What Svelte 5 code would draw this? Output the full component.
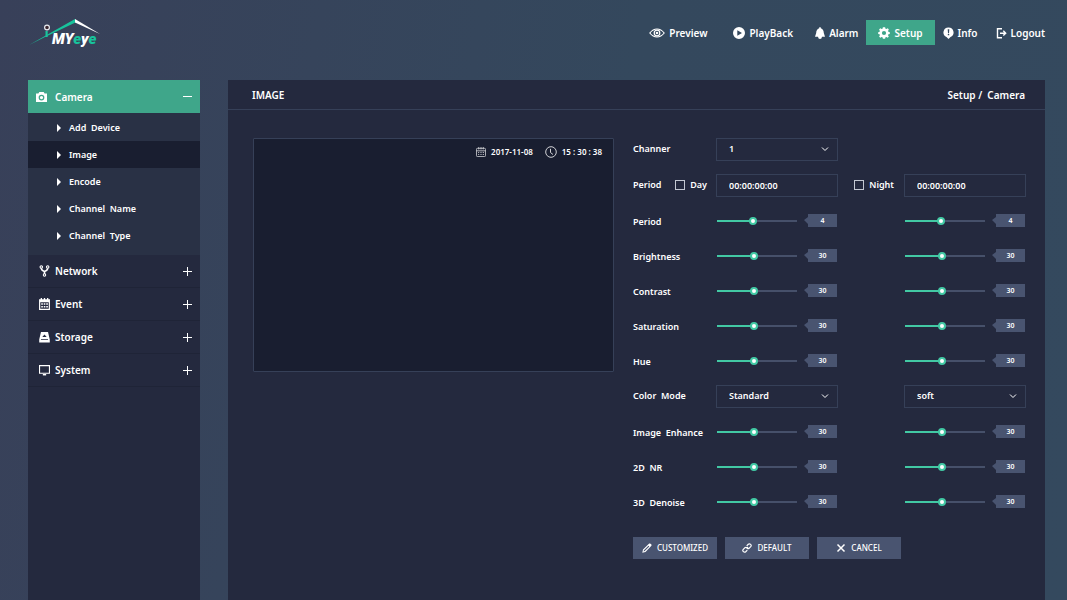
<script>
  const nav = [
    { id: 'preview', label: 'Preview' },
    { id: 'playback', label: 'PlayBack' },
    { id: 'alarm', label: 'Alarm' },
    { id: 'setup', label: 'Setup' },
    { id: 'info', label: 'Info' },
    { id: 'logout', label: 'Logout' },
  ];
  const cameraItems = ['Add  Device', 'Image', 'Encode', 'Channel  Name', 'Channel  Type'];
  const groups = ['Network', 'Event', 'Storage', 'System'];

  let page = $state('setup');
  let current = $state('Image');
  let cameraOpen = $state(true);

  let rows = $state([
    { type: 'channel', label: 'Channer' },
    { type: 'time', label: 'Period', day: '00:00:00:00', night: '00:00:00:00', dayOn: false, nightOn: false },
    { type: 'level', label: 'Period', day: 4, night: 4, max: 9 },
    { type: 'level', label: 'Brightness', day: 30, night: 30, max: 65 },
    { type: 'level', label: 'Contrast', day: 30, night: 30, max: 65 },
    { type: 'level', label: 'Saturation', day: 30, night: 30, max: 65 },
    { type: 'level', label: 'Hue', day: 30, night: 30, max: 65 },
    { type: 'mode', label: 'Color  Mode', day: 'Standard', night: 'soft' },
    { type: 'level', label: 'Image  Enhance', day: 30, night: 30, max: 65 },
    { type: 'level', label: '2D  NR', day: 30, night: 30, max: 65 },
    { type: 'level', label: '3D  Denoise', day: 30, night: 30, max: 65 },
  ]);
</script>

{#snippet icon(name)}
  {#if name === 'preview'}
    <svg class="wide" viewBox="0 0 16 12" fill="none" stroke="currentColor" stroke-width="1.2">
      <path d="M.8 6Q4 2 8 2T15.2 6Q12 10 8 10T.8 6Z" />
      <circle cx="8" cy="6" r="2.800" /><circle cx="8" cy="6" r="1.300" fill="currentColor" stroke="none" />
    </svg>
  {:else if name === 'playback'}
    <svg viewBox="0 0 12 12" fill="currentColor">
      <path fill-rule="evenodd" d="M6 0a6 6 0 1 1 0 12A6 6 0 0 1 6 0ZM4.300 3.200v5.600L9 6Z" />
    </svg>
  {:else if name === 'alarm'}
    <svg class="bell" viewBox="0 0 10 12" fill="currentColor">
      <path d="M5 0q.8 0 .8 1.200C8 2 8.800 4 8.800 6L10 9.800H0L1.200 6C1.200 4 2 2 4.200 1.200Q4.200 0 5 0ZM3 9.800h4Q6.800 12 5 12T3 9.800Z" />
    </svg>
  {:else if name === 'setup'}
    <svg viewBox="0 0 12 12" fill="currentColor">
      <path fill-rule="evenodd" d="M4.900.2h2.200l.4 1.500.9.4L9.800 1.300l1 1.300L10 3.900l.4.9 1.400.4v1.700l-1.400.4-.4.9.8 1.300-1.100 1.200-1.300-.8-.9.4-.4 1.500H4.900l-.4-1.500-.9-.4-1.300.8-1.200-1.200.8-1.300-.3-.9L.2 6.900V5.200l1.400-.4.3-.9-.8-1.300 1.200-1.300 1.300.8.9-.4ZM6 3.900a2.100 2.100 0 1 0 0 4.200 2.100 2.100 0 0 0 0-4.200Z" />
    </svg>
  {:else if name === 'info'}
    <svg class="slim" viewBox="0 0 10 12" fill="currentColor">
      <path fill-rule="evenodd" d="M5 .5a5 5 0 0 1 2 9.600L5 12 3 10.100A5 5 0 0 1 5 .5ZM4.200 2.200l.3 4h1l.3-4ZM4.300 7v1.300h1.400V7Z" />
    </svg>
  {:else if name === 'logout'}
    <svg class="slim" viewBox="0 0 10 12" fill="none" stroke="currentColor" stroke-width="1.400">
      <path d="M5.500 1.700H1v9h4.500M3.500 6.200H9M6.800 3.800 9.200 6.200 6.800 8.600" />
    </svg>
  {:else if name === 'Camera'}
    <svg class="slim" viewBox="0 0 10 9" fill="currentColor">
      <path fill-rule="evenodd" d="M3 0h4l.8 1.300H10V9H0V1.300h2.200ZM5 2.400a2.600 2.600 0 1 0 0 5.200 2.600 2.600 0 0 0 0-5.200ZM5 3.500a1.500 1.500 0 1 1 0 3 1.500 1.500 0 0 1 0-3Z" />
    </svg>
  {:else if name === 'Network'}
    <svg class="slim" viewBox="0 0 10 12" fill="none" stroke="currentColor" stroke-width="1.100">
      <circle cx="1.800" cy="2" r="1.200" /><circle cx="8.200" cy="2" r="1.200" /><circle cx="5" cy="10" r="1.200" />
      <path d="M1.800 3.200Q2 5.500 5 6.500 8 5.500 8.200 3.200M5 6.300V9" stroke-width="1.600" />
    </svg>
  {:else if name === 'Event'}
    <svg class="slim" viewBox="0 0 10 11" fill="currentColor">
      <path fill-rule="evenodd" d="M0 1.200h1.500V0h1.200v1.200h1.700V0h1.200v1.200h1.700V0h1.200v1.200H10V11H0ZM1.100 3.800v6.100h7.800V3.800Z" />
      <path d="M2 4.800h1.500v1.500H2zM4.300 4.800h1.500v1.500H4.300zM6.600 4.800h1.500v1.500H6.600zM2 7.300h1.500v1.500H2zM4.300 7.300h1.500v1.500H4.300zM6.600 7.300h1.500v1.500H6.600z" />
    </svg>
  {:else if name === 'Storage'}
    <svg class="slim" viewBox="0 0 10 10" fill="currentColor">
      <path fill-rule="evenodd" d="M1.800.5h6.400L9.800 7.200V10H.2V7.200ZM5 2.800 3 4.900h4ZM1.800 7v.8h6.400V7Z" />
    </svg>
  {:else if name === 'System'}
    <svg class="slim" viewBox="0 0 10 10" fill="none" stroke="currentColor">
      <path d="M.5 1h9v7h-9Z" /><path d="M3.500 9.300h3" stroke-width="1.300" />
    </svg>
  {:else if name === 'date'}
    <svg class="small" viewBox="0 0 11 11" fill="none" stroke="currentColor" stroke-width=".9">
      <rect x=".5" y="1.500" width="10" height="9" rx="1" />
      <path d="M.5 4.200h10M3 0v2.700M5.500 0v2.700M8 0v2.700M2.200 6h1.300M4.800 6h1.400M7.400 6h1.400M2.200 8.200h1.300M4.800 8.200h1.400M7.400 8.200h1.400" />
    </svg>
  {:else if name === 'time'}
    <svg viewBox="0 0 12 12" fill="none" stroke="currentColor">
      <circle cx="6" cy="6" r="5.300" /><path d="M5.500 2.800v3.700L8 8.500" />
    </svg>
  {:else if name === 'pencil'}
    <svg class="small" viewBox="0 0 10 10" fill="currentColor">
      <path fill-rule="evenodd" d="M.3 9.700 1 6.500 7.200.6Q8 0 9 1t.4 1.800L3.500 9ZM1.900 7.300l-.3 1.100 1.100-.3L7.300 3.600l-.8-.8Z" />
    </svg>
  {:else if name === 'link'}
    <svg class="small" viewBox="0 0 10 10" fill="none" stroke="currentColor" stroke-width="1.200">
      <path d="M4.500 5.500 6 4M4.700 2.900 6.300 1.300Q7.400.3 8.600 1.400T8.700 3.700L7.100 5.300Q6 6.200 4.900 5.200M5.300 7.100 3.700 8.700Q2.600 9.700 1.400 8.600T1.300 6.300L2.900 4.700Q4 3.800 5.100 4.800" />
    </svg>
  {:else if name === 'cross'}
    <svg class="small" viewBox="0 0 10 10" fill="none" stroke="currentColor" stroke-width="1.500">
      <path d="m1.500 1.500 7 7M8.500 1.500l-7 7" />
    </svg>
  {/if}
{/snippet}

{#snippet slider(row, key)}
  <div class="slider">
    <input
      type="range" min="0" max={row.max} bind:value={row[key]}
      aria-label="{row.label} {key}"
      style="--fill: {(row[key] / row.max) * 100}%"
    />
    <output>{row[key]}</output>
  </div>
{/snippet}

{#snippet chevron()}
  <svg class="chevron" viewBox="0 0 8 6" fill="none" stroke="currentColor"><path d="m1 1.500 3 3 3-3" /></svg>
{/snippet}

<div class="app">
  <header>
    <a class="logo" href="#home" aria-label="MYeye">
      <svg viewBox="0 0 72 32">
        <path d="M0 27 46 1l1.500 3L17 18.500Z" fill="#18c39c" />
        <path d="M46 1 71 16 46 4.500Z" fill="#fff" />
        <path d="M16.500 13h2.200v6h-2.200Z" fill="#18c39c" />
        <circle cx="18" cy="9.500" r="2.400" fill="#3a2730" stroke="#e6e9ee" stroke-width="1.200" />
        <text x="23" y="26" fill="#fff">MY<tspan fill="#18c39c">e</tspan>y<tspan fill="#18c39c">e</tspan></text>
      </svg>
    </a>
    <nav>
      {#each nav as item}
        <a href="#{item.id}" class={item.id} class:active={page === item.id} onclick={() => (page = item.id)}>
          {@render icon(item.id)}{item.label}
        </a>
      {/each}
    </nav>
  </header>

  <div class="body">
    <aside>
      <button class="group open" onclick={() => (cameraOpen = !cameraOpen)}>
        {@render icon('Camera')}
        <span>Camera</span>
        <i class="sign" class:plus={!cameraOpen}></i>
      </button>
      {#if cameraOpen}
        <ul>
          {#each cameraItems as item}
            <li class:current={current === item}>
              <a href="#camera" onclick={() => (current = item)}>{item}</a>
            </li>
          {/each}
        </ul>
      {/if}
      {#each groups as group}
        <button class="group">
          {@render icon(group)}
          <span>{group}</span>
          <i class="sign plus"></i>
        </button>
      {/each}
    </aside>

    <main>
      <div class="title">
        <h1>IMAGE</h1>
        <span class="crumbs">Setup /  Camera</span>
      </div>

      <div class="content">
        <div class="video">
          <span>{@render icon('date')}2017-11-08</span>
          <span>{@render icon('time')}15 : 30 : 38</span>
        </div>

        <form onsubmit={(e) => e.preventDefault()}>
          {#each rows as row}
            <div class="row {row.type}">
              {#if row.type === 'channel'}
                <label for="channel">{row.label}</label>
                <div class="select">
                  <select id="channel"><option>1</option><option>2</option><option>3</option></select>
                  {@render chevron()}
                </div>
              {:else if row.type === 'time'}
                <div class="lead">
                  <span>{row.label}</span>
                  <label><input type="checkbox" bind:checked={row.dayOn} />Day</label>
                </div>
                <input type="text" aria-label="Day period" bind:value={row.day} />
                <label class="night"><input type="checkbox" bind:checked={row.nightOn} />Night</label>
                <input type="text" aria-label="Night period" bind:value={row.night} />
              {:else if row.type === 'mode'}
                <label for="mode">{row.label}</label>
                <div class="select">
                  <select id="mode" bind:value={row.day}><option>Standard</option><option>soft</option></select>
                  {@render chevron()}
                </div>
                <div class="select second">
                  <select aria-label="Night color mode" bind:value={row.night}><option>Standard</option><option>soft</option></select>
                  {@render chevron()}
                </div>
              {:else}
                <span class="name">{row.label}</span>
                {@render slider(row, 'day')}
                <div class="second">{@render slider(row, 'night')}</div>
              {/if}
            </div>
          {/each}

          <div class="actions">
            <button>{@render icon('pencil')}CUSTOMIZED</button>
            <button>{@render icon('link')}DEFAULT</button>
            <button>{@render icon('cross')}CANCEL</button>
          </div>
        </form>
      </div>
    </main>
  </div>
</div>

<style>
  :global(body) { background: #35465c; }

  .app {
    box-sizing: border-box;
    min-height: 100vh;
    display: flex; flex-direction: column;
    padding: 0 22px 0 28px;
    background: linear-gradient(100deg, #384059 0%, #34485d 55%, #34495e 100%);
    color: #fff;
    font: 600 9px/16px 'Noto Sans', 'Open Sans', sans-serif;
  }
  a { color: inherit; text-decoration: none; }
  button, input, select { font: inherit; color: inherit; }
  svg { width: 12px; height: 12px; flex: none; }
  svg.wide { width: 16px; }
  svg.slim { width: 11px; }
  svg.bell { width: 10px; }
  svg.small { width: 10px; height: 10px; }

  header { display: flex; justify-content: space-between; align-items: flex-start; height: 80px; }
  .logo svg { display: block; width: 72px; height: 32px; margin: 18px 0 0 1px; }
  .logo text { font: italic 900 15px Roboto, sans-serif; }

  nav { display: flex; gap: 8px; padding-top: 20px; font-size: 10px; }
  nav a { display: flex; align-items: center; gap: 4px; height: 25px; }
  .preview { margin-right: 18px; }
  .playback { margin-right: 14px; }
  .info { margin-right: 10px; }
  .active { padding: 0 12px; background: #3fa68a; }

  .body { flex: 1; display: flex; gap: 28px; }

  aside { width: 172px; flex: none; background: #24293e; }
  .group {
    display: flex; align-items: center; gap: 5px;
    box-sizing: border-box; width: 100%; height: 33px;
    padding: 0 8px 0 11px;
    border: 0; border-bottom: 1px solid #1f2437;
    background: none; font-size: 10px; text-align: left; cursor: pointer;
  }
  .group span { flex: 1; }
  .open { padding-left: 8px; gap: 8px; background: #3fa68a; border: 0; }
  .sign {
    width: 9px; height: 9px;
    background: linear-gradient(#fff, #fff) center / 9px 1px no-repeat;
  }
  .plus {
    background:
      linear-gradient(#fff, #fff) center / 9px 1px no-repeat,
      linear-gradient(#fff, #fff) center / 1px 9px no-repeat;
  }

  ul { margin: 0; padding: 1px 0 6px; list-style: none; background: #293145; }
  li a { display: flex; align-items: center; gap: 8px; height: 27px; padding-left: 29px; white-space: pre; }
  li a::before { content: ''; border: solid transparent; border-width: 4px 0 4px 4px; border-left-color: #fff; }
  .current { background: #191e30; }

  main { flex: 1; min-width: 0; background: #24293e; }
  .title {
    display: flex; justify-content: space-between; align-items: center;
    box-sizing: border-box; height: 30px; padding: 0 20px 0 24px;
    border-bottom: 1px solid #364058; font-size: 10px;
  }
  h1 { margin: 0; font: inherit; }
  .crumbs { white-space: pre; }

  .content {
    display: grid; grid-template-columns: minmax(0, 361fr) minmax(0, 393fr); gap: 19px; align-items: start;
    padding: 21px 19px 0 25px;
  }
  .video {
    box-sizing: border-box; aspect-ratio: 361 / 234; margin-top: 7px;
    display: flex; justify-content: flex-end; align-items: flex-start; gap: 12px;
    padding: 5px 11px;
    border: 1px solid #364058; border-radius: 1px; background: #191e30;
    font-size: 8px;
  }
  .video span { display: flex; align-items: center; gap: 5px; }
  .video svg { opacity: 0.8; }

  .row {
    display: grid; grid-template-columns: 83px minmax(0, 1fr) 66px minmax(0, 1fr); align-items: center;
    height: 36px; white-space: pre;
  }
  .level { height: 35px; }
  .name { padding-top: 3px; }
  .second { grid-column: 4; }
  .lead { display: flex; justify-content: space-between; padding-right: 9px; }
  .lead label, .night { display: flex; align-items: center; gap: 5px; }
  .night { justify-content: flex-end; padding-right: 10px; }

  input[type='checkbox'] {
    appearance: none; box-sizing: border-box; width: 10px; height: 10px; margin: 0;
    border: 1px solid #c3c8d2;
  }
  input[type='checkbox']:checked { background: #42c9a4; }
  input[type='text'], select {
    appearance: none; box-sizing: border-box; width: 100%; height: 23px; margin: 0;
    padding: 0 12px; border: 1px solid #364058; border-radius: 0; background: #24293e;
  }
  option { background: #24293e; }
  .select { display: grid; align-items: center; }
  .select > * { grid-area: 1 / 1; }
  .chevron { justify-self: end; width: 8px; height: 6px; margin-right: 9px; pointer-events: none; }

  .slider { display: flex; align-items: center; gap: 7px; padding: 0 1px; }
  input[type='range'] {
    appearance: none; flex: 1; min-width: 0; height: 8px; margin: 0;
    background:
      linear-gradient(to right, #42c9a4 var(--fill), #46506a var(--fill)) center / 100% 2px no-repeat;
  }
  input[type='range']::-webkit-slider-thumb {
    appearance: none; box-sizing: border-box; width: 8px; height: 8px;
    border: 2px solid #42c9a4; border-radius: 50%; background: #fff;
  }
  output {
    box-sizing: border-box; width: 33px; height: 13px; padding-left: 4px;
    background: #495470; clip-path: polygon(4px 0, 100% 0, 100% 100%, 4px 100%, 4px 10px, 0 6px, 4px 3px);
    font-size: 7px; line-height: 13px; text-align: center;
  }

  .actions { display: flex; gap: 8px; padding-top: 18px; }
  .actions button {
    display: flex; justify-content: center; align-items: center; gap: 5px;
    width: 84px; height: 22px; padding: 0;
    border: 0; background: #495470; font-size: 8px; font-weight: 500; cursor: pointer;
  }
</style>
